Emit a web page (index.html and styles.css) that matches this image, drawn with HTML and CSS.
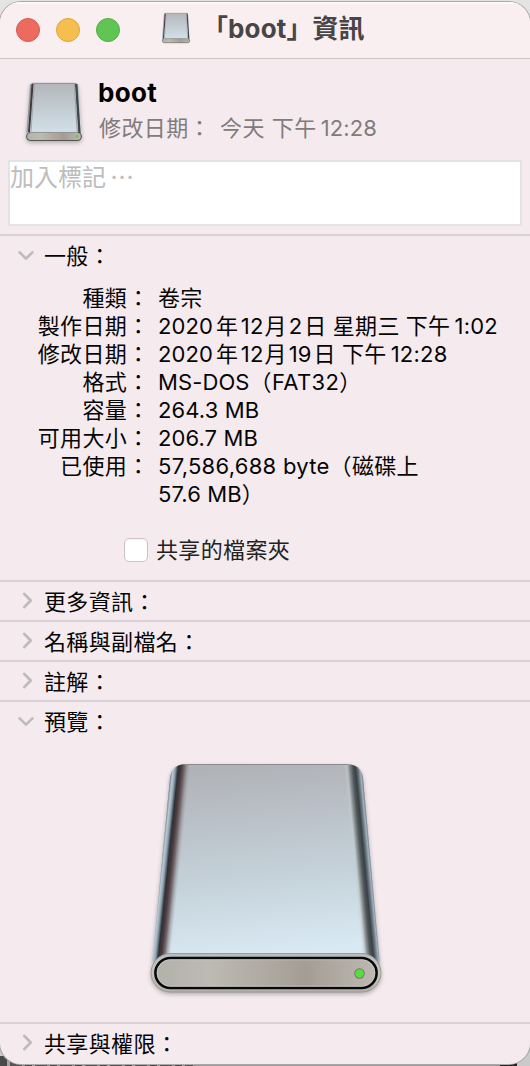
FILE: index.html
```html
<!DOCTYPE html>
<html lang="zh-Hant">
<head>
<meta charset="utf-8">
<title>「boot」資訊</title>
<link rel="stylesheet" href="styles.css">
</head>
<body>
<svg class="defs" aria-hidden="true">
  <defs>
    <linearGradient id="face" gradientUnits="userSpaceOnUse" x1="100" y1="0" x2="120" y2="192">
      <stop offset="0" stop-color="#b0b2b6"/><stop offset=".25" stop-color="#b9bfc6"/><stop offset=".6" stop-color="#c5d2da"/><stop offset="1" stop-color="#d9e9f3"/>
    </linearGradient>
    <linearGradient id="left" gradientUnits="userSpaceOnUse" x1="20.5" y1="12" x2="39.5" y2="14">
      <stop offset="0" stop-color="#7e8992"/><stop offset=".1" stop-color="#b9cad6"/><stop offset=".22" stop-color="#8ea0ad"/><stop offset=".36" stop-color="#2e3237"/><stop offset=".52" stop-color="#4a3b3e"/><stop offset=".68" stop-color="#6b5d60" stop-opacity=".9"/><stop offset=".82" stop-color="#837e83" stop-opacity=".5"/><stop offset="1" stop-color="#9ba2a8" stop-opacity="0"/>
    </linearGradient>
    <linearGradient id="right" gradientUnits="userSpaceOnUse" x1="213" y1="11" x2="195" y2="12.7">
      <stop offset="0" stop-color="#6f7a83"/><stop offset=".12" stop-color="#a1b0bd"/><stop offset=".25" stop-color="#66727b"/><stop offset=".38" stop-color="#394145"/><stop offset=".55" stop-color="#51595c"/><stop offset=".72" stop-color="#82898a" stop-opacity=".85"/><stop offset=".86" stop-color="#c2c9c9" stop-opacity=".6"/><stop offset="1" stop-color="#c5d0d5" stop-opacity="0"/>
    </linearGradient>
    <linearGradient id="front" x1="0" y1="0" x2="1" y2="0">
      <stop offset="0" stop-color="#b3b2aa"/><stop offset=".25" stop-color="#bcbab2"/><stop offset=".68" stop-color="#a59d95"/><stop offset="1" stop-color="#beb8b1"/>
    </linearGradient>
    <linearGradient id="rim" x1="0" y1="0" x2="0" y2="1">
      <stop offset="0" stop-color="#b8bdbd"/><stop offset=".5" stop-color="#c5c4be"/><stop offset="1" stop-color="#b5b0a9"/>
    </linearGradient>
    <linearGradient id="small-face" x1="0" y1="0" x2="0" y2="1">
      <stop offset="0" stop-color="#b2b6bb"/><stop offset="1" stop-color="#d5e3ec"/>
    </linearGradient>
    <symbol id="drive" viewBox="0 0 232 230" preserveAspectRatio="none" overflow="visible">
      <path d="M38 1H194C206 1 211.500 5 213 15L229.500 196V205H2.500V196L20 15C21.500 5 27 1 38 1Z" fill="url(#face)"/>
      <path d="M38 1H116V205H2.500V196L20 15C21.500 5 27 1 38 1Z" fill="url(#left)"/>
      <path d="M116 1H194C206 1 211.500 5 213 15L229.500 196V205H116Z" fill="url(#right)"/>
      <path d="M34 1.500H198" stroke="#898c90" stroke-width="1" fill="none"/>
      <rect x="1" y="190.500" width="230" height="38.500" rx="19.250" fill="url(#rim)" stroke="#918f8c" stroke-width=".8"/>
      <rect x="5.400" y="195" width="221.200" height="30" rx="15" fill="url(#front)" stroke="#08090a" stroke-width="2.600"/>
      <rect x="7.200" y="196.800" width="217.600" height="26.400" rx="13.200" fill="none" stroke="#ccc9d0" stroke-width=".7"/>
      <circle cx="209.500" cy="210.500" r="5.200" fill="#6e7966"/>
      <circle cx="209.500" cy="210.500" r="4.300" fill="#55df3c"/>
    </symbol>
    <symbol id="drive-small" viewBox="0 0 56 58" preserveAspectRatio="none" overflow="visible">
      <path d="M7 0H49Q52 0 52.300 3L55.500 50V53H.500V50L3.700 3Q4 0 7 0Z" fill="url(#small-face)"/>
      <path d="M5 1.500L1 50" stroke="#8b949c" stroke-width="1.200" fill="none"/>
      <path d="M6.500 1L3 49" stroke="#44383b" stroke-width="2" fill="none"/>
      <path d="M8.300 1L5 49" stroke="#8d8a8f" stroke-width="1" stroke-opacity=".6" fill="none"/>
      <path d="M50.200 1L53.500 50" stroke="#40484c" stroke-width="2.400" fill="none"/>
      <path d="M48.300 1L51.300 49" stroke="#a0a6a9" stroke-width="1.200" fill="none"/>
      <path d="M6 .4H50" stroke="#85888b" stroke-width=".8" fill="none"/>
      <rect x=".6" y="49.500" width="54.800" height="8" rx="4" fill="url(#front)" stroke="#55544f" stroke-width="1.100"/>
      <path d="M4 49.200H52" stroke="#c9cbc8" stroke-width=".8" fill="none"/>
      <circle cx="51" cy="53.500" r="1.400" fill="#55d53c"/>
    </symbol>
    <symbol id="down" viewBox="0 0 18 12"><path d="M1.800 2.500L9 9.500L16.200 2.500"/></symbol>
    <symbol id="side" viewBox="0 0 12 18"><path d="M2.500 1.800L9.500 9L2.500 16.200"/></symbol>
  </defs>
</svg>
<div class="desktop">
  <main class="window">
    <header class="titlebar">
      <div class="lights"><i class="red"></i><i class="yellow"></i><i class="green"></i></div>
      <svg class="proxy"><use href="#drive-small"/></svg>
      <h1 class="title">「<span class="name">boot</span>」資訊</h1>
    </header>
    <section class="summary">
      <svg class="disk"><use href="#drive-small"/></svg>
      <div class="summary-text">
        <h2>boot</h2>
        <p>修改日期：<span class="gap"></span>今天<span class="sp"></span>下午<span class="n">12:28</span></p>
      </div>
    </section>
    <div class="tags">加入標記<span class="dots">⋯</span></div>
    <section class="panel general">
      <h3><svg class="down"><use href="#down"/></svg>一般：</h3>
      <dl>
        <dt>種類：</dt><dd>卷宗</dd>
        <dt>製作日期：</dt><dd><span class="n0">2020</span><span class="year">年</span><span class="n0">12</span><span class="month">月</span><span class="n0">2</span><span class="day">日</span><span class="sp"></span>星期三<span class="sp"></span>下午<span class="n">1:02</span></dd>
        <dt>修改日期：</dt><dd><span class="n0">2020</span><span class="year">年</span><span class="n0">12</span><span class="month">月</span><span class="n0">19</span><span class="day">日</span><span class="sp"></span>下午<span class="n">12:28</span></dd>
        <dt>格式：</dt><dd><span class="n0">MS-DOS</span>（<span class="fat">FAT32</span>）</dd>
        <dt>容量：</dt><dd><span class="n0">264.3 MB</span></dd>
        <dt>可用大小：</dt><dd><span class="n0">206.7 MB</span></dd>
        <dt>已使用：</dt><dd><span class="bytes">57,586,688 byte</span>（磁碟上<br><span class="n0">57.6 MB</span>）</dd>
      </dl>
      <label class="shared"><span class="box"></span>共享的檔案夾</label>
    </section>
    <section class="panel row"><h3><svg class="side"><use href="#side"/></svg>更多資訊：</h3></section>
    <section class="panel row"><h3><svg class="side"><use href="#side"/></svg>名稱與副檔名：</h3></section>
    <section class="panel row"><h3><svg class="side"><use href="#side"/></svg>註解：</h3></section>
    <section class="panel preview">
      <h3><svg class="down"><use href="#down"/></svg>預覽：</h3>
      <svg class="big"><use href="#drive"/></svg>
    </section>
    <section class="panel row last"><h3><svg class="side"><use href="#side"/></svg>共享與權限：</h3></section>
  </main>
</div>
</body>
</html>
```
FILE: styles.css
```css
* { box-sizing: border-box; margin: 0; padding: 0; }
body { width: 530px; height: 1066px; overflow: hidden; font: 22px/28px Inter, "Noto Sans CJK TC", sans-serif; color: #050505; }
.defs { position: absolute; width: 0; height: 0; }
svg { display: block; flex: none; overflow: visible; }
.desktop {
  height: 1066px; padding-top: 2px;
  background:
    linear-gradient(90deg, #222, #222) 500px 1063px / 17px 3px no-repeat,
    repeating-linear-gradient(90deg, #4a4a4a 0 7px, #a2a2a2 7px 10px, #555 10px 22px, #999 22px 25px) 0 1056px / 193px 10px no-repeat,
    linear-gradient(#999, #999) 0 1063px / 510px 3px no-repeat,
    linear-gradient(#e4e4e4 0 30px, #dedede 30px 1040px, #cacaca 1040px);
}
.window { height: 1062px; border-radius: 21px; overflow: hidden; background: #f5ebee; box-shadow: 0 0 0 1px #aaa8a8; }
.titlebar { height: 57px; display: flex; align-items: center; padding-left: 16px; background: #f9eef0; border-bottom: 1px solid #cec4c7; box-shadow: inset 0 2px #fff9fa; }
.lights { display: flex; gap: 16px; }
.lights i { width: 24px; height: 24px; border-radius: 50%; border: 1px solid transparent; }
.lights .red { background: #ed6a5f; border-color: #d65a51; }
.lights .yellow { background: #f5bf4f; border-color: #dba53d; }
.lights .green { background: #61c554; border-color: #52ad43; }
.proxy { width: 28px; height: 30px; margin: -4px 0 0 42px; }
.title { margin: -2px 0 0 12px; font-size: 26px; line-height: 36px; font-weight: 700; color: #484546; white-space: nowrap; }
.name { letter-spacing: .15px; }
.summary { height: 101px; display: flex; padding: 24px 0 0 26px; }
.disk { width: 56px; height: 58px; }
.disk, .big { filter: drop-shadow(0 2px 2px #0004); }
.summary-text { padding-left: 16px; margin-top: -6px; }
h2 { font-size: 26px; line-height: 32px; font-weight: 700; color: #000; letter-spacing: .3px; }
.summary p { margin: 5px 0 0 1px; color: #817b7d; letter-spacing: .4px; white-space: nowrap; }
.gap { display: inline-block; width: 9px; }
.sp { display: inline-block; width: 6px; }
.summary .sp { width: 7px; }
.n { margin-left: 4px; letter-spacing: .25px; }
.summary .n { letter-spacing: .15px; }
.n0 { letter-spacing: .1px; }
.fat { letter-spacing: .35px; }
.bytes { letter-spacing: .28px; }
.year { margin: 0 2.5px 0 3px; }
.month { margin: 0 2px 0 1px; }
.day { margin-left: 2px; }
.tags { height: 66px; margin: 0 8px; padding-top: 1px; border: 2px solid #e4e3e4; background: #fff; color: #bdbdbd; font-size: 24px; line-height: 30px; }
.dots { margin-left: 4px; }
.panel { border-top: 2px solid #d9d1d5; }
.general { height: 346px; margin-top: 8px; }
h3 { display: flex; align-items: center; height: 38px; padding: 2px 0 0 18px; font-size: 22px; font-weight: 400; letter-spacing: .35px; }
h3 svg { fill: none; stroke: #bfbabc; stroke-width: 3; stroke-linecap: round; stroke-linejoin: round; }
.down { width: 16px; height: 11px; margin: -1px 10px 0 0; }
.side { width: 11px; height: 17px; margin: -3px 11px 0 4px; }
dl { display: grid; grid-template-columns: 149.5px 1fr; grid-auto-rows: minmax(28px, auto); column-gap: 8.5px; margin-top: 10px; letter-spacing: .35px; }
dt { text-align: right; }
dd { white-space: nowrap; }
.shared { display: flex; align-items: center; gap: 8px; margin: 28px 0 0 124px; color: #222; letter-spacing: .35px; }
.box { width: 24px; height: 24px; border-radius: 5px; background: #fff; border: 1px solid #cbc5c7; box-shadow: inset 0 1px 2px #0001; }
.row { height: 40px; }
.preview { height: 322px; }
.big { width: 232px; height: 230px; margin: 23px 0 0 150px; }
```
